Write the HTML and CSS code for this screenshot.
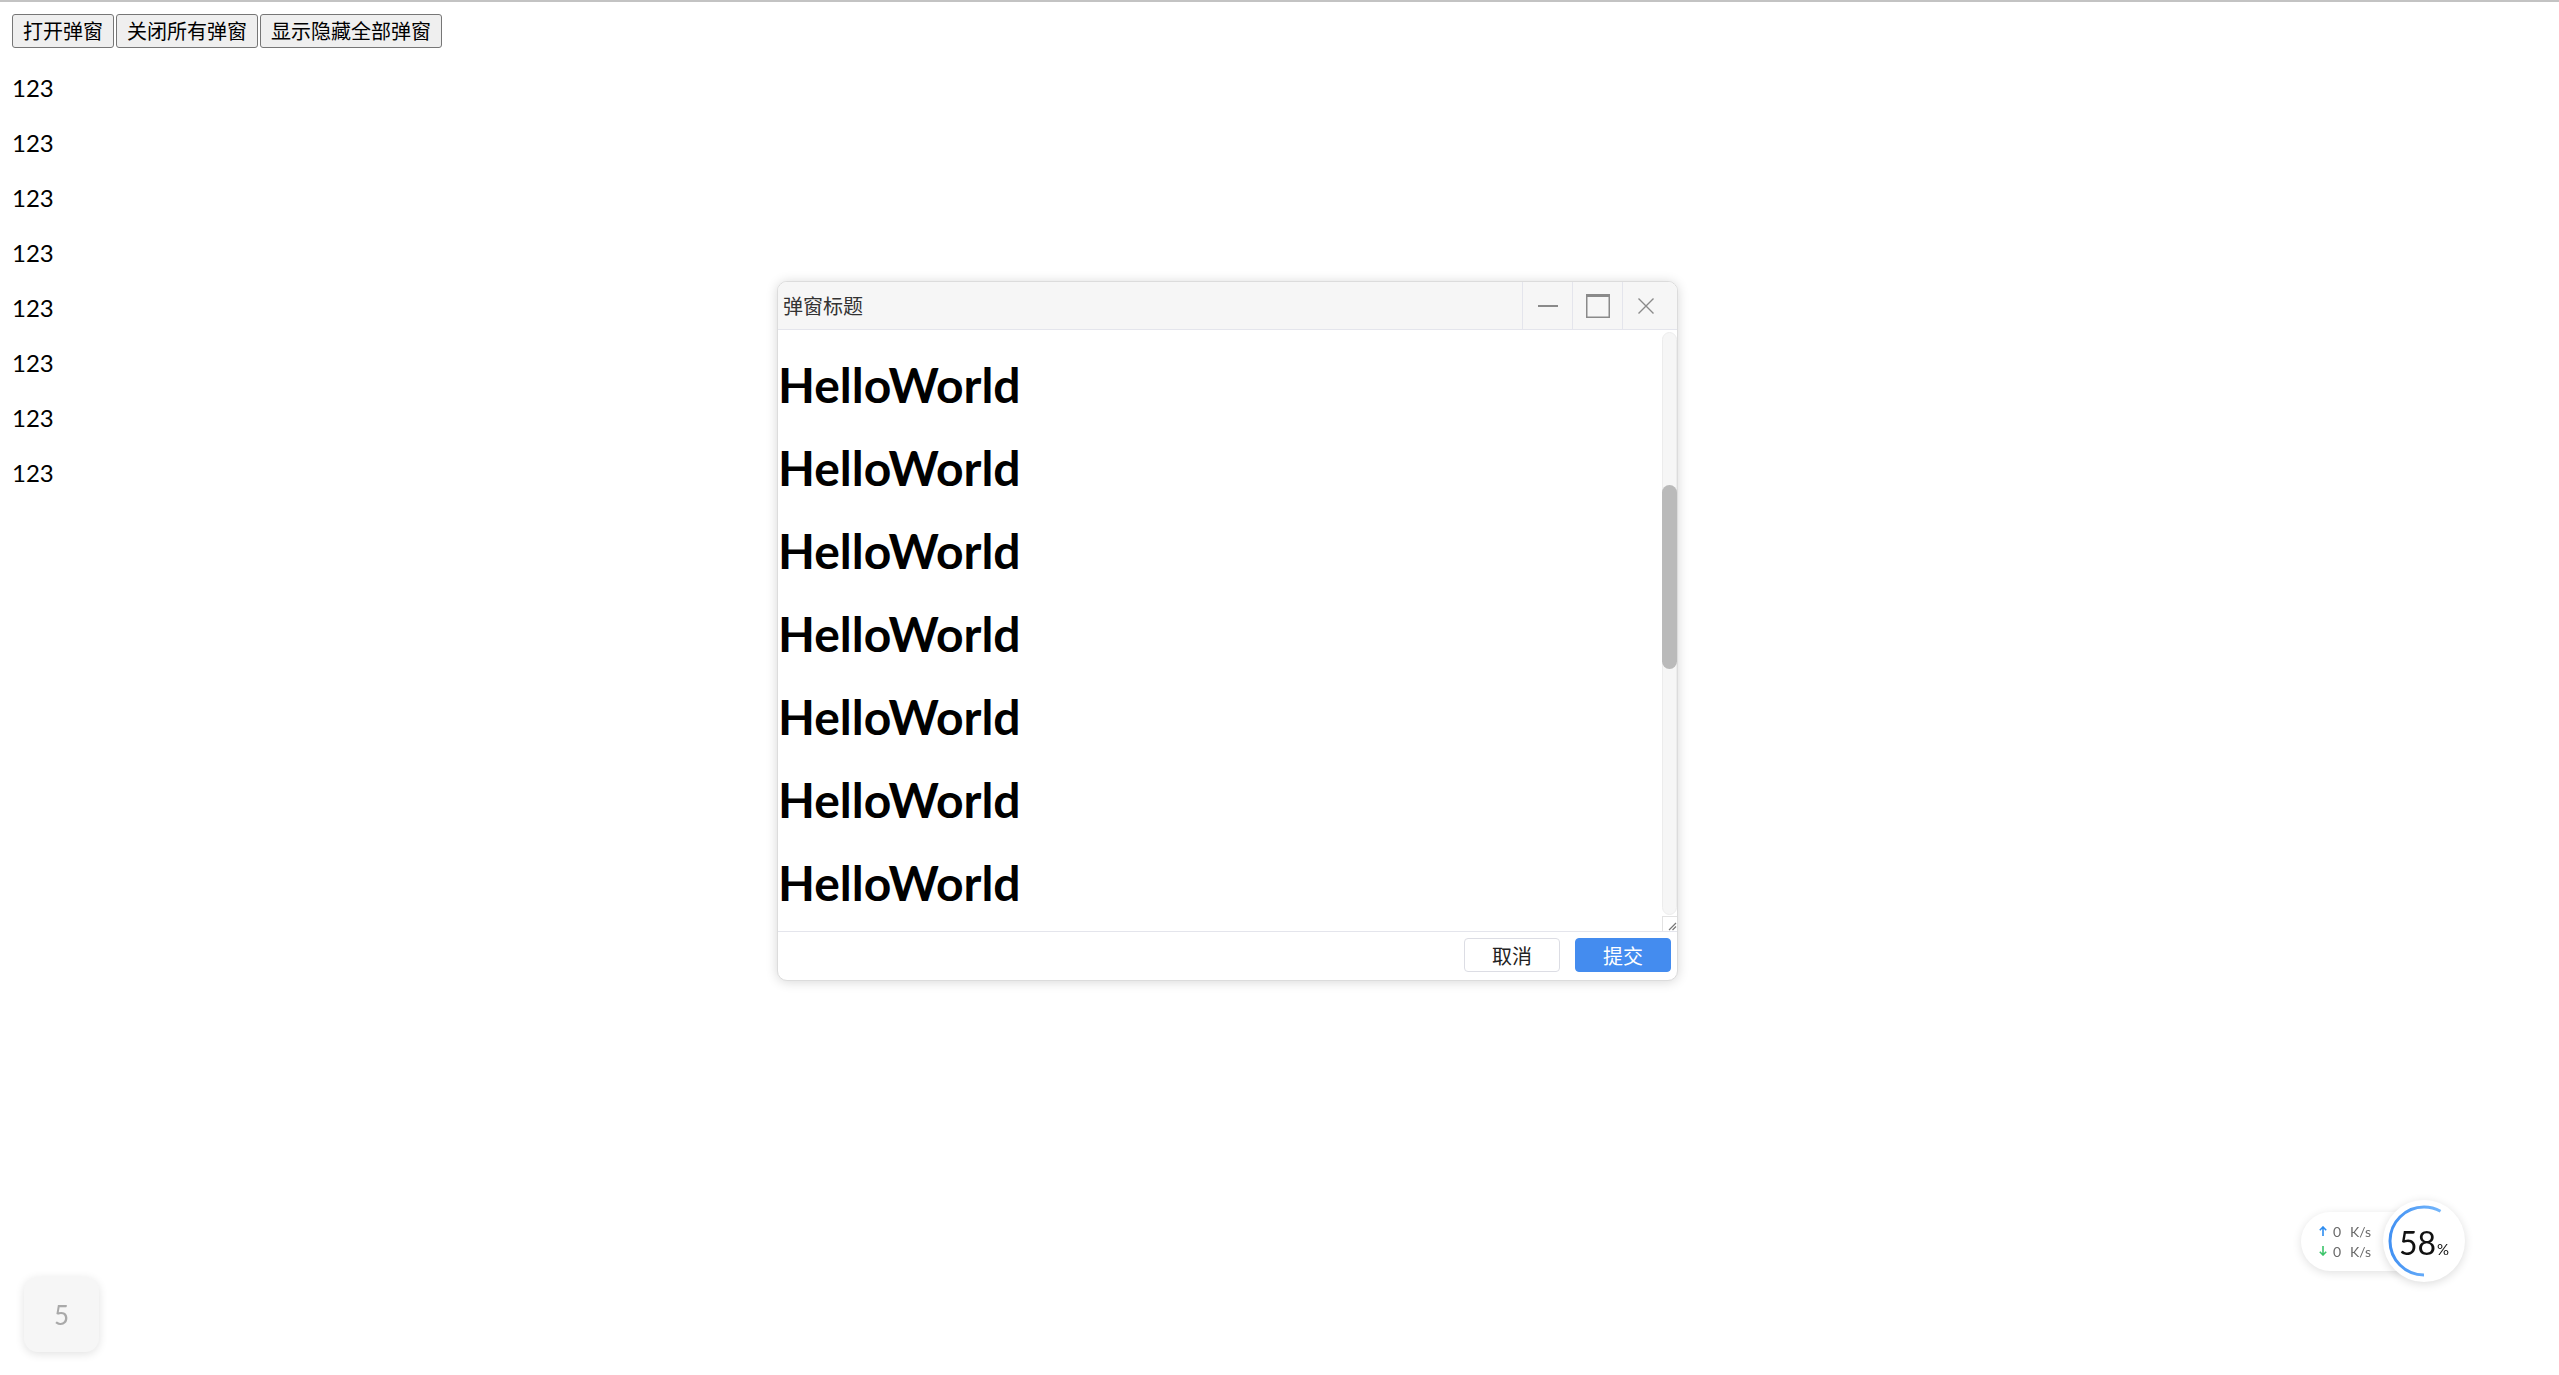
FILE: index.html
```html
<!DOCTYPE html>
<html lang="zh-CN">
<head>
<meta charset="utf-8">
<title>弹窗示例</title>
<link rel="stylesheet" href="styles.css">
</head>
<body>
<div class="topline"></div>
<main class="page">
  <div class="toolbar">
    <button class="btn">打开弹窗</button>
    <button class="btn">关闭所有弹窗</button>
    <button class="btn">显示隐藏全部弹窗</button>
  </div>
  <p class="row">123</p>
  <p class="row">123</p>
  <p class="row">123</p>
  <p class="row">123</p>
  <p class="row">123</p>
  <p class="row">123</p>
  <p class="row">123</p>
  <p class="row">123</p>
</main>

<div class="dialog">
  <div class="dlg-head">
    <div class="dlg-title">弹窗标题</div>
    <button class="dlg-ctl" aria-label="最小化">
      <svg width="20" height="4" viewBox="0 0 20 4"><line x1="0" y1="2" x2="20" y2="2" stroke="#8a8a8a" stroke-width="2"/></svg>
    </button>
    <button class="dlg-ctl" aria-label="最大化">
      <svg width="24" height="24" viewBox="0 0 24 24"><rect x="0.75" y="1.5" width="22.5" height="21.75" fill="none" stroke="#8a8a8a" stroke-width="1.5"/><line x1="0" y1="1.5" x2="24" y2="1.5" stroke="#8a8a8a" stroke-width="3"/></svg>
    </button>
    <button class="dlg-ctl close" aria-label="关闭">
      <svg width="16" height="16" viewBox="0 0 16 16"><path d="M0.5 0.5 L15.5 15.5 M15.5 0.5 L0.5 15.5" stroke="#8a8a8a" stroke-width="1.4" fill="none"/></svg>
    </button>
  </div>
  <div class="dlg-body">
    <div class="dlg-content">
      <h1 class="hello">HelloWorld</h1>
      <h1 class="hello">HelloWorld</h1>
      <h1 class="hello">HelloWorld</h1>
      <h1 class="hello">HelloWorld</h1>
      <h1 class="hello">HelloWorld</h1>
      <h1 class="hello">HelloWorld</h1>
      <h1 class="hello">HelloWorld</h1>
    </div>
    <div class="vscroll">
      <div class="vtrack"><div class="vthumb"></div></div>
      <div class="vresizer">
        <svg width="14" height="14" viewBox="0 0 14 14"><path d="M6 13 L13 6 M9.5 13 L13 9.5" stroke="#777" stroke-width="1.2" fill="none"/></svg>
      </div>
    </div>
  </div>
  <div class="dlg-foot">
    <button class="fbtn">取消</button>
    <button class="fbtn primary">提交</button>
  </div>
</div>

<div class="counter">5</div>

<div class="netmon">
  <div class="net-pill">
    <div class="net-row">
      <span class="arr"><svg width="8" height="10" viewBox="0 0 8 10"><path d="M4 10 V1.2 M0.8 4.2 L4 1 L7.2 4.2" stroke="#2d8cf0" stroke-width="1.6" fill="none"/></svg></span>
      <span class="val">0</span><span class="unit">K/s</span>
    </div>
    <div class="net-row">
      <span class="arr"><svg width="8" height="10" viewBox="0 0 8 10"><path d="M4 0 V8.8 M0.8 5.8 L4 9 L7.2 5.8" stroke="#3cc46a" stroke-width="1.6" fill="none"/></svg></span>
      <span class="val">0</span><span class="unit">K/s</span>
    </div>
  </div>
  <div class="net-ring">
    <svg class="ring-svg" width="82" height="82" viewBox="0 0 82 82">
      <defs>
        <linearGradient id="ringGrad" x1="0" y1="0" x2="0" y2="82" gradientUnits="userSpaceOnUse">
          <stop offset="0" stop-color="#8cc8ff"/>
          <stop offset="1" stop-color="#3b8cf2"/>
        </linearGradient>
      </defs>
      <circle cx="41" cy="41" r="34" fill="none" stroke="url(#ringGrad)" stroke-width="3" stroke-dasharray="123.9 300" transform="rotate(90 41 41)"/>
    </svg>
    <div class="ring-text"><span class="pct">58</span><span class="pct-sign">%</span></div>
  </div>
</div>
</body>
</html>
```

FILE: styles.css
```css
html, body {
  margin: 0;
  padding: 0;
  background: #ffffff;
}

body {
  font-family: "Lato", "Noto Sans CJK SC", sans-serif;
  color: #000;
}

.topline {
  height: 2px;
  background: #c3c3c3;
}

.page {
  padding: 12px;
}

.toolbar {
  display: flex;
  gap: 2px;
}

.btn {
  font-family: "Noto Sans CJK SC", sans-serif;
  font-size: 20px;
  height: 34px;
  line-height: 32px;
  padding: 0 10px;
  border: 1px solid #767676;
  border-radius: 3px;
  background: #efefef;
  color: #000;
}

.row {
  margin: 24px 0;
  font-size: 24px;
  line-height: 31px;
}

/* dialog window */
.dialog {
  position: absolute;
  left: 777px;
  top: 281px;
  width: 901px;
  height: 700px;
  box-sizing: border-box;
  border: 1px solid #dcdcdc;
  border-radius: 10px;
  background: #fff;
  box-shadow: 0 1px 12px rgba(0, 0, 0, 0.16);
  display: flex;
  flex-direction: column;
  overflow: hidden;
}

.dlg-head {
  flex: none;
  display: flex;
  height: 48px;
  box-sizing: border-box;
  border-bottom: 1px solid #e4e5ec;
  background: #f6f6f6;
}

.dlg-title {
  flex: 1;
  display: flex;
  align-items: center;
  padding-left: 5px;
  font-family: "Noto Sans CJK SC", sans-serif;
  font-size: 20px;
  color: #333;
}

.dlg-ctl {
  width: 50px;
  padding: 0;
  border: 0;
  border-left: 1px solid #e4e5ec;
  background: transparent;
  display: flex;
  align-items: center;
  justify-content: center;
}

.dlg-ctl.close {
  width: 55px;
  padding-right: 8px;
}

.dlg-body {
  flex: none;
  height: 601px;
  display: flex;
}

.dlg-content {
  flex: 1;
  overflow: hidden;
  padding-top: 29px;
}

.hello {
  margin: 0 0 32px 0;
  font-family: "Lato", sans-serif;
  font-weight: 700;
  font-size: 48px;
  line-height: 51px;
  color: #000;
}

.vscroll {
  width: 15px;
  display: flex;
  flex-direction: column;
}

.vtrack {
  flex: 1;
  margin-top: 2px;
  box-sizing: border-box;
  background: #f6f6f6;
  border: 1px solid #ececec;
  border-radius: 8px;
  padding-top: 152px;
}

.vthumb {
  height: 184px;
  margin: 0 -1px;
  background: #bababa;
  border-radius: 8px;
}

.vresizer {
  height: 15px;
  margin-top: 1px;
  box-sizing: border-box;
  border-left: 1px solid #e2e2e2;
  border-top: 1px solid #e2e2e2;
  display: flex;
  align-items: flex-end;
  justify-content: flex-end;
}

.dlg-foot {
  flex: 1;
  display: flex;
  justify-content: flex-end;
  align-items: flex-start;
  gap: 15px;
  padding: 6px 6px 0 0;
  border-top: 1px solid #e4e5ec;
}

.fbtn {
  width: 96px;
  height: 34px;
  padding: 0;
  border: 1px solid #dcdde4;
  border-radius: 4px;
  background: #fff;
  font-family: "Noto Sans CJK SC", sans-serif;
  font-size: 20px;
  color: #222;
}

.fbtn.primary {
  background: #448cef;
  border-color: #448cef;
  color: #fff;
}

/* bottom-left counter */
.counter {
  position: fixed;
  left: 24px;
  bottom: 23px;
  width: 75px;
  height: 75px;
  border-radius: 14px;
  background: #f6f6f6;
  box-shadow: 0 2px 10px rgba(0, 0, 0, 0.12);
  display: flex;
  align-items: center;
  justify-content: center;
  font-family: "Lato", sans-serif;
  font-size: 26px;
  color: #a9a9a9;
}

/* bottom-right network monitor */
.netmon {
  position: fixed;
  left: 2301px;
  top: 1200px;
  width: 164px;
  height: 82px;
  display: flex;
  align-items: center;
}

.net-pill {
  width: 130px;
  height: 59px;
  box-sizing: border-box;
  border-radius: 30px;
  background: #fff;
  box-shadow: 0 2px 10px rgba(0, 0, 0, 0.12);
  padding-left: 18px;
  display: flex;
  flex-direction: column;
  justify-content: center;
}

.net-row {
  display: flex;
  align-items: center;
  height: 20px;
  font-family: "Lato", sans-serif;
  font-size: 14px;
  color: #6a6a6a;
}

.arr {
  width: 14px;
  display: flex;
  align-items: center;
}

.val {
  width: 17px;
}

.net-ring {
  position: relative;
  width: 82px;
  height: 82px;
  margin-left: -48px;
  border-radius: 50%;
  background: #fff;
  box-shadow: 0 2px 10px rgba(0, 0, 0, 0.14);
  display: flex;
  align-items: center;
  justify-content: center;
}

.ring-svg {
  position: absolute;
  left: 0;
  top: 0;
}

.ring-text {
  display: flex;
  align-items: baseline;
  font-family: "Lato", sans-serif;
  color: #111;
  padding-top: 2px;
}

.pct {
  font-size: 32px;
}

.pct-sign {
  font-size: 15px;
  margin-left: 1px;
}
```
